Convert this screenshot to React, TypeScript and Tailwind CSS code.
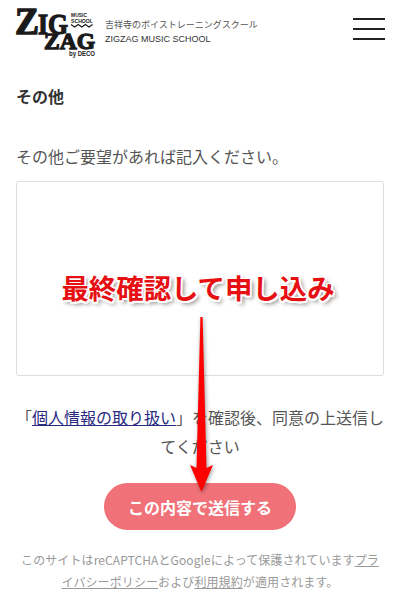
const JP = '"Noto Sans CJK JP", "Noto Sans", sans-serif';

function Logo() {
  const ink = '#1a1a1a';
  return (
    <svg width="86" height="54" viewBox="0 0 86 54" className="shrink-0 overflow-visible">
      <text x="0" y="30" fontFamily="Liberation Serif" fontWeight="700" fontSize="37" fill={ink} stroke={ink} strokeWidth="1.3" textLength="24" lengthAdjust="spacingAndGlyphs">Z</text>
      <text x="23" y="30" fontFamily="Liberation Serif" fontWeight="700" fontSize="29" fill={ink} stroke={ink} strokeWidth="1.3" textLength="30" lengthAdjust="spacingAndGlyphs">IG</text>
      <text x="56" y="13" fontFamily="Liberation Sans" fontWeight="700" fontSize="5.5" fill={ink} textLength="16" lengthAdjust="spacingAndGlyphs">MUSIC</text>
      <text x="56" y="18.5" fontFamily="Liberation Sans" fontWeight="700" fontSize="5.5" fill={ink} textLength="22" lengthAdjust="spacingAndGlyphs">SCHOOL</text>
      <path d="M56 20.5l3.6 2.5 3.6-2.5 3.6 2.5 3.6-2.5 3.6 2.5 3.6-2.5" fill="none" stroke={ink} strokeWidth="1.2" />
      <text x="29" y="45" fontFamily="Liberation Serif" fontWeight="700" fontSize="24" fill={ink} stroke={ink} strokeWidth="1.3" textLength="51" lengthAdjust="spacingAndGlyphs">ZAG</text>
      <text x="54" y="52" fontFamily="Liberation Sans" fontWeight="700" fontSize="6.5" fill={ink} textLength="26" lengthAdjust="spacingAndGlyphs">by DECO</text>
    </svg>
  );
}

export default function App() {
  return (
    <div className="relative w-[400px] h-[600px] overflow-hidden bg-white text-[#555]" style={{ fontFamily: JP }}>
      <header className="h-[62px] flex items-center pl-[15px] pr-[15px]">
        <Logo />
        <div className="ml-[4px] flex-1 mt-[1px]">
          <p className="text-[9px] leading-[14px] text-[#555]">吉祥寺のボイストレーニングスクール</p>
          <p className="text-[9px] leading-[14px] text-[#333]" style={{ fontFamily: '"Liberation Sans", sans-serif' }}>ZIGZAG MUSIC SCHOOL</p>
        </div>
        <div className="flex flex-col gap-[8px] w-[32px] mt-[-4px]">
          <span className="block h-[2px] bg-[#222]" />
          <span className="block h-[2px] bg-[#222]" />
          <span className="block h-[2px] bg-[#222]" />
        </div>
      </header>

      <main className="px-[16px]">
        <h2 className="mt-[22px] text-[16px] leading-[24px] font-bold text-[#333]">その他</h2>
        <p className="mt-[36px] text-[16px] leading-[24px]">その他ご要望があれば記入ください。</p>
        <textarea className="block mt-[13px] w-full h-[195px] border border-[#ddd] rounded-[3px] bg-white resize-none" />
        <p className="mt-[27px] -mx-[2px] text-center text-[16px] leading-[29px]">
          「<a className="text-[#2a2a80] underline">個人情報の取り扱い</a>」を確認後、同意の上送信してください
        </p>
        <div className="mt-[22px] flex justify-center">
          <button className="w-[192px] h-[47px] rounded-full bg-[#f07178] text-white text-[16px] font-bold">この内容で送信する</button>
        </div>
        <p className="mt-[19px] text-center text-[12px] leading-[21.5px] tracking-[0.1px] text-[#999]">
          このサイトはreCAPTCHAとGoogleによって保護されています<a className="underline">プライバシーポリシー</a>および<a className="underline">利用規約</a>が適用されます。
        </p>
      </main>

      <div className="absolute left-[-2px] top-[268px] w-full text-center text-[27.4px] leading-[38px] font-bold text-[#e60f12] [text-shadow:1.5px_0_0_#fff,-1.5px_0_0_#fff,0_1.5px_0_#fff,0_-1.5px_0_#fff,1.5px_1.5px_0_#fff,-1.5px_1.5px_0_#fff,1.5px_-1.5px_0_#fff,-1.5px_-1.5px_0_#fff,3px_3px_4px_rgba(0,0,0,0.5)]">
        最終確認して申し込み
      </div>

      <svg className="absolute left-[180px] top-[310px]" width="44" height="190" viewBox="0 0 44 190">
        <path d="M20.4 7 L22.6 7 L26.5 158 L33 155 L21.5 182 L10 155 L16.5 158 Z" fill="#ff0000" style={{ filter: 'drop-shadow(1px 1px 2px rgba(0,0,0,0.4))' }} />
      </svg>
    </div>
  );
}
